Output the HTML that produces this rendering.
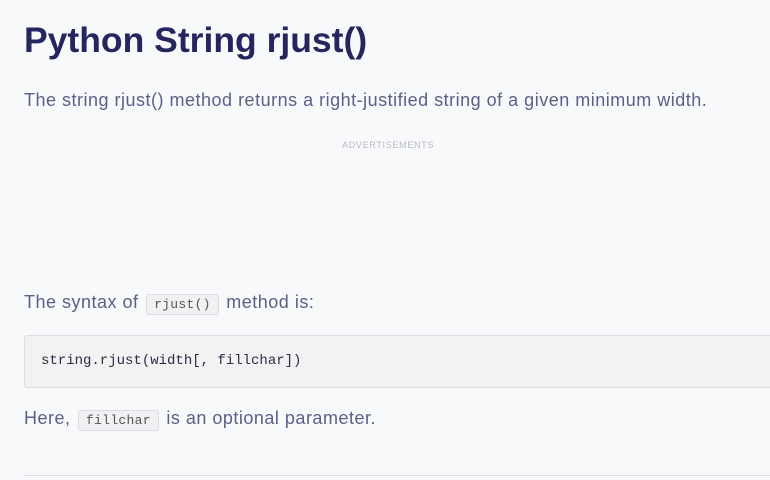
<!DOCTYPE html>
<html><head><style>
body{margin:0;background:#f8f9fb;width:770px;height:480px;overflow:hidden;font-family:"Liberation Sans",sans-serif;position:relative}
.a{position:absolute;white-space:nowrap}
h1{position:absolute;left:24px;top:16px;margin:0;font-size:35.5px;font-weight:bold;color:#25265e;line-height:48px}
.p{font-size:18px;letter-spacing:0.5px;color:#5c6088;left:24px}
code{font-family:"Liberation Mono",monospace;font-size:13px;letter-spacing:0.3px;color:#555;background:#f1f1f3;border:1px solid #dcdde2;border-radius:3px;padding:2px 7px;margin:0 2px}
.box{position:absolute;left:24px;top:335px;width:760px;height:53px;background:#f2f2f3;border:1px solid #dcdde2;border-radius:3px;box-sizing:border-box}
</style></head><body>
<h1>Python String rjust()</h1>
<div class="a p" style="top:90px">The string rjust() method returns a right-justified string of a given minimum width.</div>
<div class="a" style="left:342px;top:140px;font-size:9px;letter-spacing:0.7px;color:#b8bac4">ADVERTISEMENTS</div>
<div class="a p" style="top:292px">The syntax of <code>rjust()</code> method is:</div>
<div class="box"><div class="a" style="left:16px;top:17px;font-family:'Liberation Mono',monospace;font-size:14px;color:#2b2d42">string.rjust(width[, fillchar])</div></div>
<div class="a p" style="top:408px">Here, <code>fillchar</code> is an optional parameter.</div>
<div class="a" style="left:24px;top:475px;width:746px;height:1px;background:#dcdde2"></div>
</body></html>
